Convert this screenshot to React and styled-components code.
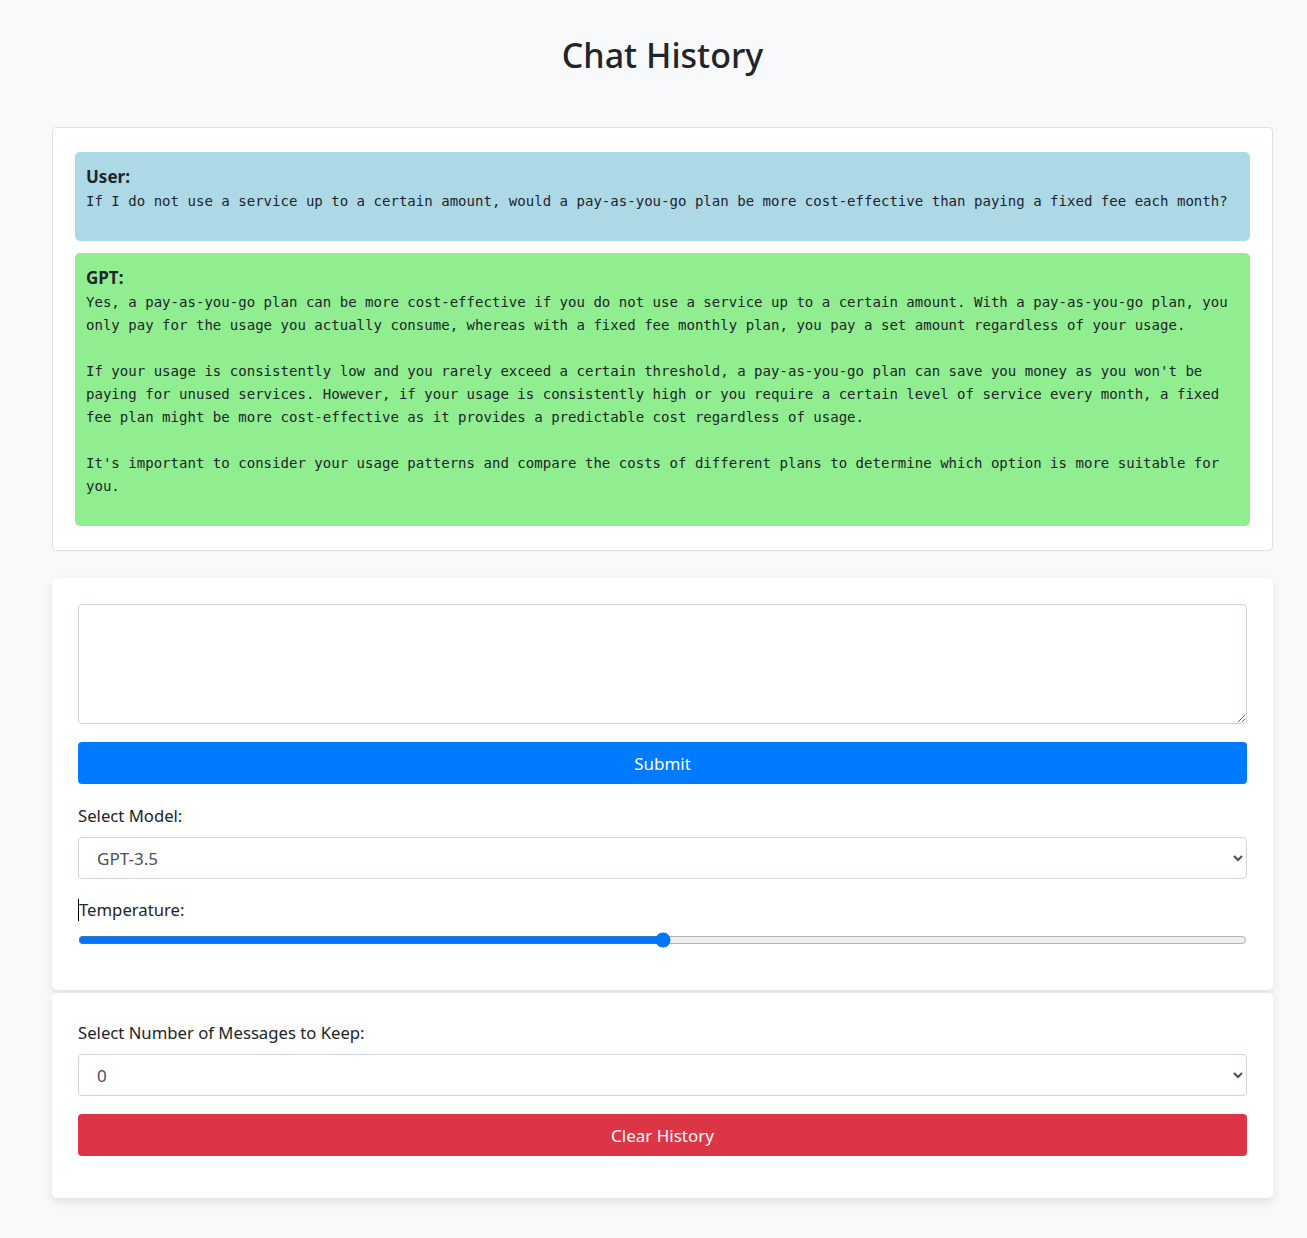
import React from "react";
import styled, { createGlobalStyle } from "styled-components";

const GlobalStyle = createGlobalStyle`
	html, body {
		margin: 0;
		padding: 0;
		background: #f8f9fa;
		color: #212529;
		font-family: "Noto Sans", "Open Sans", sans-serif;
	}
	* {
		box-sizing: border-box;
	}
`;

const Page = styled.div`
	width: 1221px;
	margin-left: 52px;
	padding: 35px 0 39px;
`;

const Title = styled.h1`
	margin: 0 0 51px;
	text-align: center;
	font-size: 34px;
	font-weight: 500;
	line-height: 41px;
	color: #212529;
`;

const HistoryCard = styled.div`
	display: flex;
	flex-direction: column;
	gap: 12px;
	background: #fff;
	border: 1px solid #dee2e6;
	border-radius: 4px;
	padding: 24px 22px;
	margin-bottom: 27px;
`;

const Message = styled.div`
	background: ${(p) => (p.$role === "user" ? "#add8e6" : "#90ee90")};
	border-radius: 5px;
	padding: 12px 11px;
`;

const Sender = styled.strong`
	display: block;
	font-size: 17px;
	line-height: 26px;
	font-weight: 700;
`;

const Text = styled.pre`
	margin: 0 0 16px;
	font-family: "DejaVu Sans Mono", "Liberation Mono", monospace;
	font-size: 14.05px;
	line-height: 23px;
	white-space: pre-wrap;
	color: #212529;
`;

const Panel = styled.div`
	background: #fff;
	border-radius: 5px;
	box-shadow: 0 4px 10px rgba(0, 0, 0, 0.1);
	padding: ${(p) => p.$padding || "26px"};
	margin-top: ${(p) => p.$top || "0"};
`;

const TextArea = styled.textarea`
	display: block;
	width: 100%;
	height: 120px;
	border: 1px solid #ced4da;
	border-radius: 4px;
	padding: 8px 12px;
	font-family: inherit;
	font-size: 16px;
	resize: vertical;
`;

const Button = styled.button`
	display: block;
	width: 100%;
	height: 42px;
	margin-top: 18px;
	border: none;
	border-radius: 4px;
	background: ${(p) => (p.$danger ? "#dc3545" : "#007bff")};
	color: #fff;
	font-family: inherit;
	font-size: 17px;
	cursor: pointer;
`;

const Label = styled.label`
	display: block;
	margin-top: ${(p) => p.$top || "0"};
	margin-bottom: 9px;
	font-size: 16.7px;
	line-height: 24px;
	color: #212529;
`;

const Caret = styled.span`
	display: inline-block;
	width: 1px;
	height: 22px;
	background: #000;
	vertical-align: -5px;
`;

const Select = styled.select`
	display: block;
	width: 100%;
	height: 42px;
	border: 1px solid #ced4da;
	border-radius: 4px;
	padding: 0 10px 0 14px;
	background: #fff;
	color: #495057;
	font-family: inherit;
	font-size: 17px;
`;

const Slider = styled.input`
	display: block;
	width: 100%;
	margin: 10px 0 16px;
`;

const gptReply = `Yes, a pay-as-you-go plan can be more cost-effective if you do not use a service up to a certain amount. With a pay-as-you-go plan, you only pay for the usage you actually consume, whereas with a fixed fee monthly plan, you pay a set amount regardless of your usage.

If your usage is consistently low and you rarely exceed a certain threshold, a pay-as-you-go plan can save you money as you won't be paying for unused services. However, if your usage is consistently high or you require a certain level of service every month, a fixed fee plan might be more cost-effective as it provides a predictable cost regardless of usage.

It's important to consider your usage patterns and compare the costs of different plans to determine which option is more suitable for you.`;

const App = () => {
	return (
		<>
			<GlobalStyle />
			<Page>
				<Title>Chat History</Title>
				<HistoryCard>
					<Message $role="user">
						<Sender>User:</Sender>
						<Text>
							If I do not use a service up to a certain amount, would a pay-as-you-go plan be more
							cost-effective than paying a fixed fee each month?
						</Text>
					</Message>
					<Message $role="gpt">
						<Sender>GPT:</Sender>
						<Text>{gptReply}</Text>
					</Message>
				</HistoryCard>

				<Panel $padding="26px 26px 26px">
					<TextArea />
					<Button>Submit</Button>
					<Label $top="20px">Select Model:</Label>
					<Select defaultValue="gpt-3.5">
						<option value="gpt-3.5">GPT-3.5</option>
						<option value="gpt-4">GPT-4</option>
					</Select>
					<Label $top="19px">
						<Caret />
						Temperature:
					</Label>
					<Slider type="range" min="0" max="1" step="0.1" defaultValue="0.5" />
				</Panel>

				<Panel $padding="28px 26px 42px" $top="3px">
					<Label>Select Number of Messages to Keep:</Label>
					<Select defaultValue="0">
						<option value="0">0</option>
						<option value="2">2</option>
						<option value="4">4</option>
					</Select>
					<Button $danger>Clear History</Button>
				</Panel>
			</Page>
		</>
	);
};

export default App;
